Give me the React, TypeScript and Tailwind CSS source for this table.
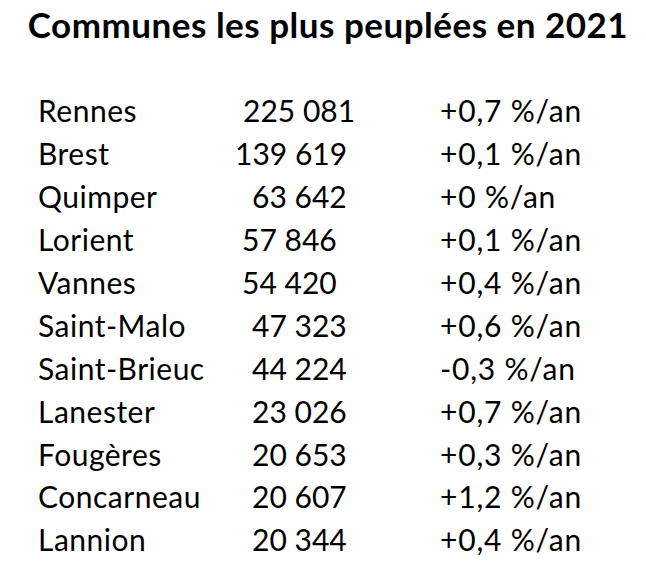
import React from "react";

const rows: { name: string; num: string; numCls: string; pct: string }[] = [
  { name: "Rennes", num: "225 081", numCls: "pl-[1px]", pct: "+0,7 %/an" },
  { name: "Brest", num: "139 619", numCls: "-ml-[7px]", pct: "+0,1 %/an" },
  { name: "Quimper", num: "63 642", numCls: "pl-[10px]", pct: "+0 %/an" },
  { name: "Lorient", num: "57 846", numCls: "pl-[0px]", pct: "+0,1 %/an" },
  { name: "Vannes", num: "54 420", numCls: "pl-[0px]", pct: "+0,4 %/an" },
  { name: "Saint-Malo", num: "47 323", numCls: "pl-[10px]", pct: "+0,6 %/an" },
  { name: "Saint-Brieuc", num: "44 224", numCls: "pl-[10px]", pct: "-0,3 %/an" },
  { name: "Lanester", num: "23 026", numCls: "pl-[10px]", pct: "+0,7 %/an" },
  { name: "Fougères", num: "20 653", numCls: "pl-[10px]", pct: "+0,3 %/an" },
  { name: "Concarneau", num: "20 607", numCls: "pl-[10px]", pct: "+1,2 %/an" },
  { name: "Lannion", num: "20 344", numCls: "pl-[10px]", pct: "+0,4 %/an" },
];

export default function App() {
  return (
    <div className="w-[646px] h-[568px] bg-white text-black font-['Lato',sans-serif] overflow-hidden">
      <h1 className="text-[35px] font-bold leading-[48px] text-center tracking-[0.5px] pl-[10px]">
        Communes les plus peuplées en 2021
      </h1>
      <div className="pt-[41px] pl-[38px]">
        {rows.map((r) => (
          <div key={r.name} className="grid grid-cols-[204px_198px_1fr] h-[42.9px] items-center text-[30px] leading-none">
            <div className="tracking-[0.5px]">{r.name}</div>
            <div className={r.numCls}>{r.num}</div>
            <div className="tracking-[0.8px]">{r.pct}</div>
          </div>
        ))}
      </div>
    </div>
  );
}
